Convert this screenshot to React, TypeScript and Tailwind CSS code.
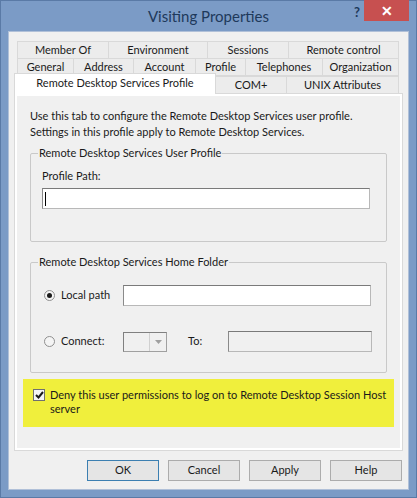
import React from 'react';

const font = { fontFamily: '"Segoe UI", Lato, "Noto Sans", sans-serif' };

const Tab = ({ label, w, active = false }: { label: string; w: string; active?: boolean }) => (
  <div
    className={`${w} flex items-center justify-center border border-[#d9d9d9] -ml-px first:ml-0 ${
      active ? 'bg-white h-[21px] border-b-0 relative z-10 pb-[2px]' : 'bg-[#ececec] h-[18px]'
    }`}
  >
    {label}
  </div>
);

const TextBox = ({ w, disabled = false, caret = false }: { w: string; disabled?: boolean; caret?: boolean }) => (
  <div
    className={`${w} h-[21px] border border-[#b8b8b8] border-t-[#7a7a7a] border-l-[#8a8a8a] flex items-center pl-[2px] ${
      disabled ? 'bg-[#f0f0f0]' : 'bg-white'
    }`}
  >
    {caret && <span className="w-px h-[14px] bg-black" />}
  </div>
);

const Button = ({ label, primary = false }: { label: string; primary?: boolean }) => (
  <div
    className={`w-[72px] h-[21px] flex items-center justify-center border bg-[#e5e5e5] ${
      primary ? 'border-[#3c7fb1]' : 'border-[#acacac]'
    }`}
  >
    {label}
  </div>
);

export default function App() {
  return (
    <div
      className="w-[417px] h-[498px] bg-[#7b9bc6] border border-[#5a7aa6] flex flex-col text-[11px] text-[#1a1a1a]"
      style={font}
    >
      {/* title bar */}
      <div className="h-[30px] flex items-start relative">
        <div className="flex-1 text-center text-[15px] text-[#1e395b] pt-[4px]">Visiting Properties</div>
        <div className="absolute right-[56px] top-[2px] text-[13px] font-bold text-[#1e395b]">?</div>
        <div className="absolute right-[7px] top-[-1px] w-[45px] h-[21px] bg-[#c75050] flex items-center justify-center text-white text-[14px] font-bold">
          ✕
        </div>
      </div>

      {/* client area */}
      <div className="mx-[7px] flex-1 bg-[#f0f0f0] border border-[#b0c0d8] flex flex-col">
        <div className="pt-[9px] px-[5px]">
          {/* tab rows */}
          <div className="flex ml-[3px]">
            <Tab label="Member Of" w="w-[92px]" />
            <Tab label="Environment" w="w-[100px]" />
            <Tab label="Sessions" w="w-[82px]" />
            <Tab label="Remote control" w="w-[111px]" />
          </div>
          <div className="flex ml-[3px] -mt-px">
            <Tab label="General" w="w-[57px]" />
            <Tab label="Address" w="w-[61px]" />
            <Tab label="Account" w="w-[63px]" />
            <Tab label="Profile" w="w-[51px]" />
            <Tab label="Telephones" w="w-[78px]" />
            <Tab label="Organization" w="w-[77px]" />
          </div>
          <div className="flex items-end -mt-[3px]">
            <Tab label="Remote Desktop Services Profile" w="w-[202px]" active />
            <Tab label="COM+" w="w-[72px]" />
            <Tab label="UNIX Attributes" w="w-[113px]" />
          </div>

          {/* tab page */}
          <div className="-mt-px h-[358px] border border-[#d9d9d9] bg-white p-[2px]">
            <div className="h-full bg-[#f0f0f0] px-[13px] pt-[12px] flex flex-col">
              <p className="leading-[16px]">
                Use this tab to configure the Remote Desktop Services user profile.
                <br />
                Settings in this profile apply to Remote Desktop Services.
              </p>

              <fieldset className="mt-[6px] border border-[#c9c9c9] rounded-[2px] h-[96px] px-[11px] pb-0">
                <legend className="px-[1px] ml-[-4px] leading-[14px]">Remote Desktop Services User Profile</legend>
                <div className="mt-[9px] leading-[14px]">Profile Path:</div>
                <div className="mt-[5px]">
                  <TextBox w="w-[328px]" caret />
                </div>
              </fieldset>

              <fieldset className="mt-[13px] border border-[#c9c9c9] rounded-[2px] h-[118px] px-[13px]">
                <legend className="px-[1px] ml-[-6px] leading-[14px]">Remote Desktop Services Home Folder</legend>
                <div className="mt-[16px] flex items-center">
                  <div className="w-[79px] flex items-center gap-[6px]">
                    <span className="w-[11px] h-[11px] rounded-full border border-[#8f8f8f] bg-[#f4f4f4] flex items-center justify-center">
                      <span className="w-[5px] h-[5px] rounded-full bg-[#1a1a1a]" />
                    </span>
                    <span>Local path</span>
                  </div>
                  <TextBox w="w-[248px]" />
                </div>
                <div className="mt-[25px] flex items-center">
                  <div className="w-[79px] flex items-center gap-[6px]">
                    <span className="w-[11px] h-[11px] rounded-full border border-[#8f8f8f] bg-[#f4f4f4]" />
                    <span>Connect:</span>
                  </div>
                  <div className="w-[44px] h-[20px] border border-[#a0a0a0] border-t-[#808080] border-l-[#808080] bg-[#f0f0f0] flex justify-end">
                    <div className="w-[17px] h-full border-l border-[#d0d0d0] flex items-center justify-center">
                      <svg width="7" height="4" viewBox="0 0 7 4">
                        <path d="M0 0h7L3.5 4z" fill="#a0a0a0" />
                      </svg>
                    </div>
                  </div>
                  <span className="ml-[21px] w-[40px]">To:</span>
                  <TextBox w="w-[144px]" disabled />
                </div>
              </fieldset>

              <div className="mt-[6px] -mx-[7px] h-[48px] bg-[#f0ef3c] flex items-start pl-[10px] pt-[9px]">
                <span className="mt-[1px] w-[12px] h-[12px] border border-[#707070] bg-[#f4f4f4] flex items-center justify-center shrink-0">
                  <svg width="9" height="8" viewBox="0 0 9 8">
                    <path d="M1 4l2.5 2.5L8 1" stroke="#1a1a1a" strokeWidth="2" fill="none" />
                  </svg>
                </span>
                <p className="ml-[5px] leading-[14px] w-[340px]">
                  Deny this user permissions to log on to Remote Desktop Session Host server
                </p>
              </div>
            </div>
          </div>
        </div>

        {/* buttons */}
        <div className="flex justify-end gap-[9px] pr-[6px] mt-[9px]">
          <Button label="OK" primary />
          <Button label="Cancel" />
          <Button label="Apply" />
          <Button label="Help" />
        </div>
      </div>
      <div className="h-[7px]" />
    </div>
  );
}
